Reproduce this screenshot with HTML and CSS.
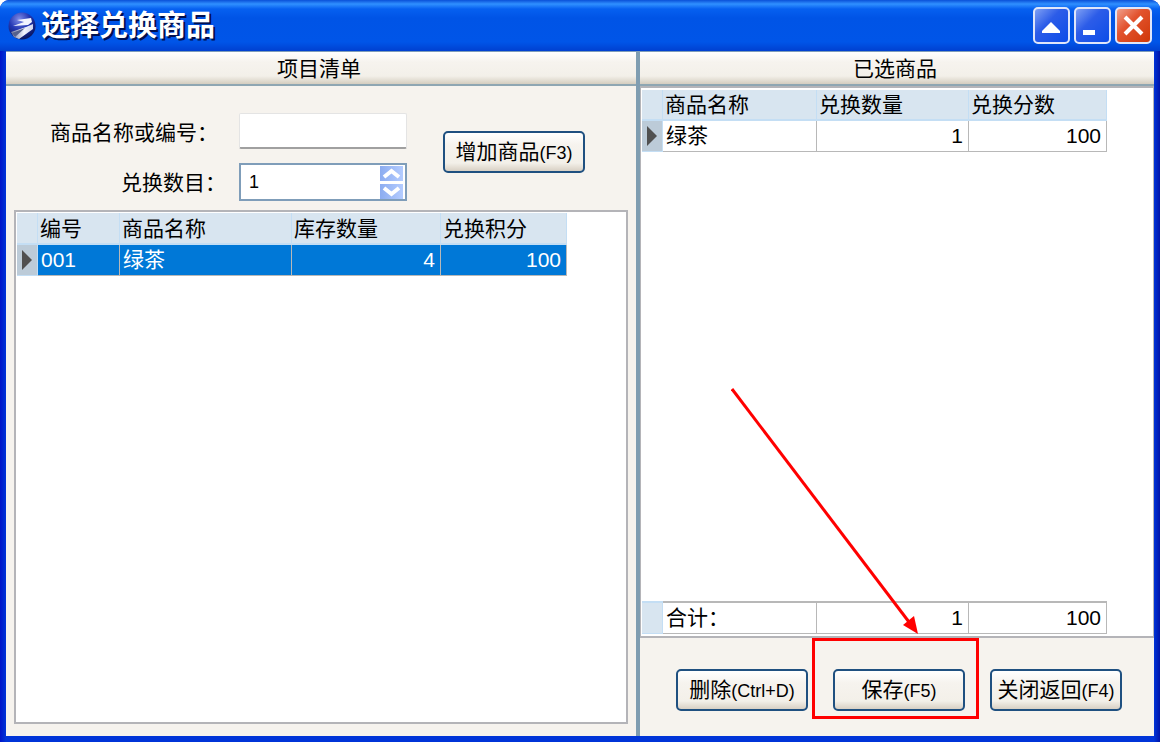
FILE: index.html
```
<!DOCTYPE html>
<html lang="zh-CN">
<head>
    <meta charset="UTF-8">
    <meta name="viewport" content="width=device-width, initial-scale=1.0">
    <title>选择兑换商品</title>
    <link rel="stylesheet" href="styles.css">
</head>
<body>
    <div class="window">
        <header class="titlebar">
            <svg class="logo" viewBox="0 0 28 28" aria-hidden="true">
                <defs>
                    <radialGradient id="ball" cx="40%" cy="25%" r="75%">
                        <stop offset="0" stop-color="#7f8de8"/>
                        <stop offset="0.5" stop-color="#2437b4"/>
                        <stop offset="1" stop-color="#0a1560"/>
                    </radialGradient>
                    <linearGradient id="band" x1="0" x2="1" y1="0" y2="0">
                        <stop offset="0" stop-color="#7078a0"/>
                        <stop offset="0.6" stop-color="#f2f4ff"/>
                        <stop offset="1" stop-color="#d0d4ee"/>
                    </linearGradient>
                </defs>
                <circle cx="14" cy="14" r="13.5" fill="url(#ball)"/>
                <path d="M9 8 L23 6 L24 10 L20 13 L5 14 L16 10Z" fill="#f2f4ff"/>
                <path d="M3 20 L18 15 L25 12 L25 17 L11 27 L6 25Z" fill="url(#band)"/>
                <path d="M4 21 L17 16 L7 25Z" fill="#55608c"/>
            </svg>
            <h1>选择兑换商品</h1>
            <div class="win-buttons">
                <button class="win-btn" type="button" aria-label="收起">
                    <svg viewBox="0 0 33 33"><path d="M16 13 L25 22 V24 H7 V22Z" fill="#fff"/></svg>
                </button>
                <button class="win-btn" type="button" aria-label="最小化">
                    <svg viewBox="0 0 33 33"><path d="M7 21 H19 V26 H7Z" fill="#fff"/></svg>
                </button>
                <button class="win-btn close" type="button" aria-label="关闭">
                    <svg viewBox="0 0 33 33"><path d="M8 8 L25 25 M25 8 L8 25" stroke="#fff" stroke-width="4" fill="none"/></svg>
                </button>
            </div>
        </header>

        <main class="panels">
            <section class="panel">
                <h2>项目清单</h2>
                <form class="search">
                    <div class="fields">
                        <label class="wide" for="keyword">商品名称或编号：</label>
                        <input class="text" type="text" id="keyword">
                        <label for="amount">兑换数目：</label>
                        <div class="spinner">
                            <input type="text" id="amount" value="1">
                            <div class="arrows">
                                <button type="button" aria-label="增加">
                                    <svg viewBox="0 0 23 15"><path d="M4 11 L11.5 5 L19 11" stroke="#fff" stroke-width="4" fill="none"/></svg>
                                </button>
                                <button type="button" aria-label="减少">
                                    <svg viewBox="0 0 23 15"><path d="M4 4 L11.5 10 L19 4" stroke="#fff" stroke-width="4" fill="none"/></svg>
                                </button>
                            </div>
                        </div>
                    </div>
                    <button class="btn add" type="button">增加商品<span>(F3)</span></button>
                </form>
                <div class="list">
                    <table class="grid stock">
                        <thead>
                            <tr>
                                <th class="mark"></th>
                                <th class="code">编号</th>
                                <th class="name">商品名称</th>
                                <th class="qty">库存数量</th>
                                <th class="points">兑换积分</th>
                            </tr>
                        </thead>
                        <tbody>
                            <tr class="selected">
                                <td class="mark current"></td>
                                <td>001</td>
                                <td>绿茶</td>
                                <td class="num">4</td>
                                <td class="num">100</td>
                            </tr>
                        </tbody>
                    </table>
                </div>
            </section>

            <section class="panel chosen">
                <h2>已选商品</h2>
                <div class="list">
                    <table class="grid picked">
                        <thead>
                            <tr>
                                <th class="mark"></th>
                                <th class="name">商品名称</th>
                                <th class="qty">兑换数量</th>
                                <th class="points">兑换分数</th>
                            </tr>
                        </thead>
                        <tbody>
                            <tr>
                                <td class="mark current"></td>
                                <td>绿茶</td>
                                <td class="num">1</td>
                                <td class="num">100</td>
                            </tr>
                        </tbody>
                    </table>
                    <table class="grid picked total">
                        <tbody>
                            <tr>
                                <td class="mark"></td>
                                <td class="name">合计：</td>
                                <td class="num qty">1</td>
                                <td class="num points">100</td>
                            </tr>
                        </tbody>
                    </table>
                </div>
                <div class="actions">
                    <button class="btn" type="button">删除<span>(Ctrl+D)</span></button>
                    <div class="save">
                        <button class="btn" type="button">保存<span>(F5)</span></button>
                        <div class="highlight"></div>
                        <svg class="pointer" viewBox="0 0 188 247" aria-hidden="true">
                            <path d="M1 1 L178 234" stroke="#f00" stroke-width="3" fill="none"/>
                            <path d="M187 246 L172 237 L183 228Z" fill="#f00"/>
                        </svg>
                    </div>
                    <button class="btn" type="button">关闭返回<span>(F4)</span></button>
                </div>
            </section>
        </main>
    </div>
</body>
</html>
```
FILE: styles.css
```
* {
    box-sizing: border-box;
}

body {
    margin: 0;
    background-color: #fff;
    color: #000;
    font-family: "Liberation Sans", "Noto Sans CJK SC", sans-serif;
    font-size: 21px;
    line-height: 30px;
}

h1, h2 {
    margin: 0;
}

button, input {
    font: inherit;
    color: inherit;
}

.window {
    display: flex;
    flex-direction: column;
    min-height: 100vh;
    padding: 0 6px 6px;
    border-radius: 9px 9px 0 0;
    background: linear-gradient(to right, #0014c8, #0034d8 6px, #0034d8 calc(100% - 6px), #0014a8);
}

/* title bar */
.titlebar {
    display: flex;
    align-items: center;
    height: 51px;
    margin: 0 -6px;
    padding: 0 8px;
    border-radius: 9px 9px 0 0;
    background: linear-gradient(#0a50d8, #3090ff 4px, #0660f0 9px, #0054e6 18px, #0055e8 42px, #0040d0);
}

.logo {
    width: 28px;
    height: 28px;
    margin-right: 5px;
}

.titlebar h1 {
    flex: 1;
    color: #fff;
    font-size: 29px;
    font-weight: bold;
    line-height: 40px;
    text-shadow: 2px 2px 0 #001050;
}

.win-buttons {
    display: flex;
    gap: 4px;
}

.win-btn {
    width: 37px;
    height: 37px;
    padding: 0;
    border: 2px solid #dfe6fa;
    border-radius: 5px;
    background: linear-gradient(135deg, #7fa0f4, #2c5ce8 40%, #0c4ce8);
}

.win-btn.close {
    background: linear-gradient(135deg, #f0a08c, #e2532e 40%, #d03808);
}

.win-btn svg {
    display: block;
}

/* the two panes */
.panels {
    flex: 1;
    display: grid;
    grid-template-columns: 630fr 518fr;
    border-top: 1px solid #7f9db9;
    background-color: #f6f3ee;
}

.panel {
    display: flex;
    flex-direction: column;
    min-width: 0;
}

.panel.chosen {
    border-left: 4px solid #7f9db1;
}

.panel h2 {
    height: 34px;
    padding-right: 4px;
    border-bottom: 2px solid #8ea6b2;
    background: linear-gradient(#fff, #f6f3ee 10px, #f3f0e9 24px, #d4cdbf);
    font-size: 21px;
    font-weight: normal;
    line-height: 33px;
    text-align: center;
}

.search {
    display: flex;
    align-items: flex-start;
    gap: 36px;
    padding: 27px 8px 9px;
}

.fields {
    display: grid;
    grid-template-columns: 233px 168px;
    row-gap: 14px;
    align-items: center;
    margin-left: -8px;
}

.fields label {
    padding-top: 2px;
    padding-right: 13px;
    text-align: right;
}

.fields label.wide {
    padding-top: 4px;
    padding-right: 21px;
}

.text {
    width: 100%;
    height: 36px;
    padding: 0 8px;
    border: 1px solid #e4e4e4;
    border-bottom: 2px solid #a0a0a0;
    border-radius: 2px;
    background-color: #fff;
}

.spinner {
    display: flex;
    height: 38px;
    border: 2px solid #7f9db9;
    background-color: #fff;
}

.spinner input {
    flex: 1;
    min-width: 0;
    padding: 0 8px;
    border: none;
    background: none;
    font-size: 18px;
}

.arrows {
    display: flex;
    flex-direction: column;
    justify-content: center;
    gap: 3px;
    width: 25px;
    padding-right: 2px;
}

.arrows button {
    height: 15px;
    padding: 0;
    border: none;
    background: linear-gradient(to right, #8cacf0, #b4ccff);
}

.arrows svg {
    display: block;
}

.btn {
    width: 132px;
    height: 42px;
    padding: 0;
    border: 2px solid #1f5080;
    border-radius: 5px;
    background: linear-gradient(#fff, #f6f3ee 12px, #f3f0e9 30px, #d8d0c4);
    white-space: nowrap;
}

.btn span {
    font-size: 18px;
}

.btn.add {
    width: 142px;
    margin-top: 18px;
}

/* lists */
.list {
    flex: 1;
    display: flex;
    flex-direction: column;
    justify-content: space-between;
    align-items: flex-start;
    margin: 0 8px 12px;
    padding: 1px;
    border: 2px solid #b4b4b8;
    background-color: #fff;
}

.chosen .list {
    margin: 0;
    padding: 2px 1px;
    border-left-width: 1px;
    border-right-width: 1px;
}

.grid {
    table-layout: fixed;
    border-collapse: separate;
    border-spacing: 0;
}

.grid.stock {
    width: 550px;
}

.grid.picked {
    width: 465px;
}

.grid th, .grid td {
    height: 31px;
    padding: 0 5px 0 3px;
    border-right: 1px solid #b8b8b8;
    border-bottom: 1px solid #b8b8b8;
    line-height: 30px;
    text-align: left;
    font-weight: normal;
    white-space: nowrap;
}

.grid th {
    padding: 0 2px;
    border-color: #c4def4;
    border-bottom-width: 2px;
    background-color: #d8e5f0;
    line-height: 29px;
}

.grid .mark {
    width: 21px;
    padding: 0;
    border-color: #c4def4;
    background-color: #d8e5f0;
}

.grid .current {
    background-color: #bccbd8;
}

.current::before {
    content: "";
    display: block;
    width: 0;
    margin-left: 5px;
    border: 10px solid transparent;
    border-left-color: #505050;
    border-right: none;
}

.grid td.num {
    text-align: right;
}

.stock .code {
    width: 82px;
}

.stock .name {
    width: 172px;
}

.stock .qty {
    width: 149px;
}

.picked .name {
    width: 154px;
}

.picked .qty {
    width: 152px;
}

.stock th {
    height: 32px;
}

.selected td {
    background-color: #0078d7;
    color: #fff;
}

.total td {
    border-top: 2px solid #b8b8b8;
}

/* bottom buttons */
.actions {
    display: flex;
    justify-content: center;
    gap: 25px;
    padding: 31px 0 25px 4px;
}

.save {
    position: relative;
}

.highlight {
    position: absolute;
    inset: -31px -14px -8px -21px;
    border: 3px solid #f00;
    pointer-events: none;
}

.pointer {
    position: absolute;
    right: 46px;
    bottom: 76px;
    width: 188px;
    height: 247px;
    pointer-events: none;
}
```
